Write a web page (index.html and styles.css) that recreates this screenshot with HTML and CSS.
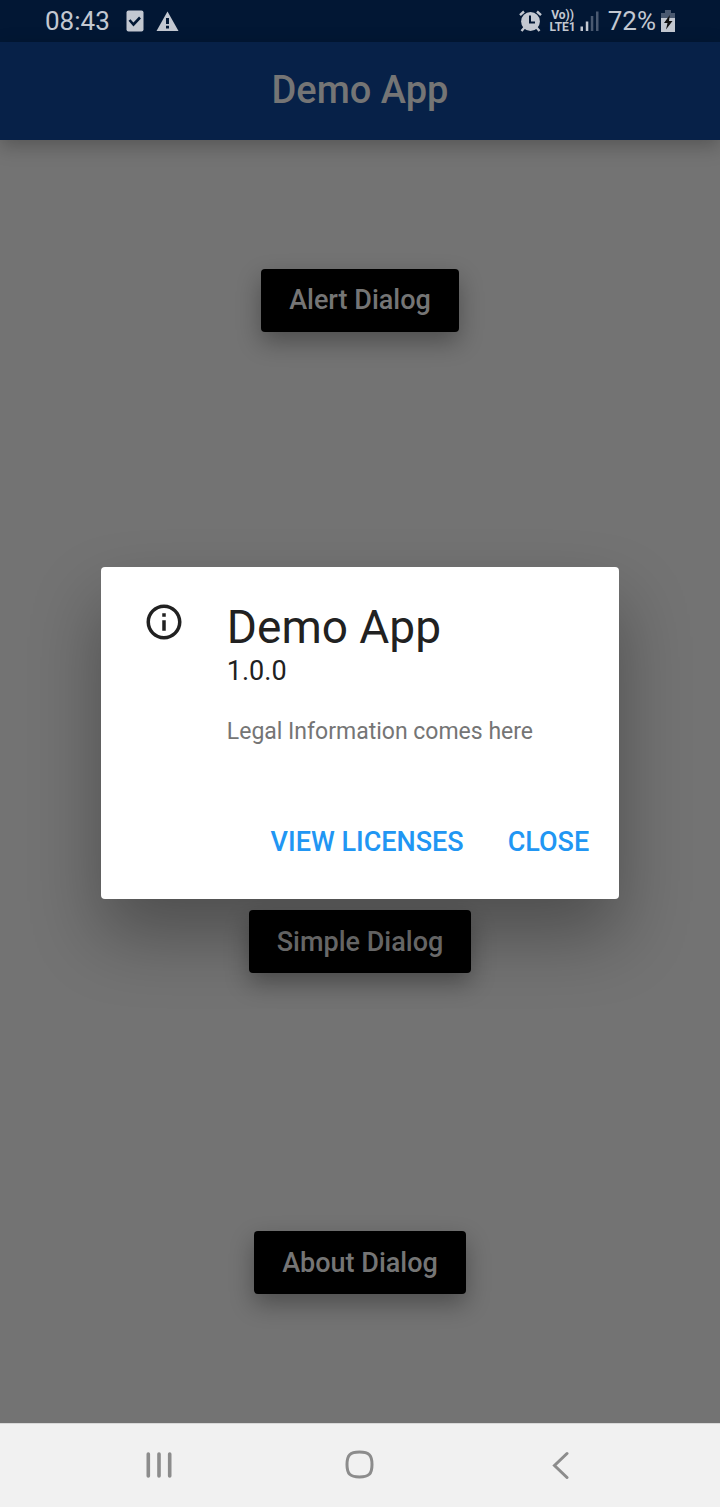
FILE: index.html
```html
<!DOCTYPE html>
<html lang="en">
<head>
<meta charset="utf-8">
<meta name="viewport" content="width=device-width, initial-scale=1">
<title>Demo App</title>
<link rel="stylesheet" href="styles.css">
</head>
<body>
<div class="screen">
  <div class="app">
    <div class="status-bar">
      <div class="status-group status-left">
        <span class="clock">08:43</span>
        <svg class="check-icon" width="18" height="22" viewBox="0 0 18 22" aria-hidden="true"><rect x="0.5" y="0.5" width="17" height="21" rx="2" fill="#c3c8d1"/><path d="M3.500 10l4 4.500 6.500-7" fill="none" stroke="#021734" stroke-width="2.600"/></svg>
        <svg width="23" height="20" viewBox="0 0 23 20" aria-hidden="true"><path d="M11.500 0.500L22.500 20H0.500z" fill="#c3c8d1"/><path d="M10 7h3v6h-3zM10 14.700h3v2.800h-3z" fill="#021734"/></svg>
      </div>
      <div class="status-group status-right">
        <svg class="alarm-icon" width="23" height="22" viewBox="0 0 23 22" aria-hidden="true"><circle cx="11.500" cy="11.500" r="9.400" fill="#c3c8d1"/><path d="M1 5.200L5 1.500M22 5.200L18 1.500M5.500 17.500l-3 3.500M17.500 17.500l3 3.500" fill="none" stroke="#c3c8d1" stroke-width="2.400"/><path d="M11 5.500v7h5" fill="none" stroke="#021734" stroke-width="2"/></svg>
        <span class="network"><span>Vo))</span><span>LTE1</span></span>
        <svg class="signal-icon" width="19" height="20" viewBox="0 0 19 20" aria-hidden="true"><path d="M0.500 15.500h2.500V20H0.500zM5.800 10.500h2.500V20H5.800z" fill="#c3c8d1"/><path d="M10.800 5h2.500v15h-2.500zM16 0.500h2.500V20H16z" fill="#4a5970"/></svg>
        <span class="battery-level">72%</span>
        <svg class="battery-icon" width="14" height="22" viewBox="0 0 14 22" aria-hidden="true"><path d="M4 0h6v3h4v6H0V3h4z" fill="#4a5970"/><path d="M0 8h14v14H0z" fill="#c3c8d1"/><path d="M8.800 5L3 13h3.500L5 19.500 11.500 11H8z" fill="#111"/></svg>
      </div>
    </div>
    <header class="app-bar"><h1 class="app-title">Demo App</h1></header>
    <main class="content">
      <button class="raised-button" type="button">Alert Dialog</button>
      <button class="raised-button covered" type="button" aria-label="Dialog"></button>
      <button class="raised-button" type="button">Simple Dialog</button>
      <button class="raised-button" type="button">About Dialog</button>
    </main>
    <div class="dialog-layer">
      <section class="dialog" role="dialog" aria-modal="true" aria-labelledby="dialog-title">
        <div class="dialog-body">
          <svg class="info-icon" width="42" height="42" viewBox="0 0 24 24" aria-hidden="true"><path d="M11 7h2v2h-2zm0 4h2v6h-2zm1-9C6.480 2 2 6.480 2 12s4.480 10 10 10 10-4.480 10-10S17.520 2 12 2zm0 18c-4.410 0-8-3.590-8-8s3.590-8 8-8 8 3.590 8 8-3.590 8-8 8z" fill="#212121"/></svg>
          <div class="dialog-text">
            <h2 class="dialog-title" id="dialog-title">Demo App</h2>
            <p class="version">1.0.0</p>
            <p class="legal">Legal Information comes here</p>
          </div>
        </div>
        <div class="dialog-actions">
          <button class="text-button" type="button">VIEW LICENSES</button>
          <button class="text-button" type="button">CLOSE</button>
        </div>
      </section>
    </div>
  </div>
  <nav class="nav-bar" aria-label="System navigation">
    <button class="nav-button" type="button" aria-label="Recent apps"><svg width="28" height="28" viewBox="0 0 28 28" aria-hidden="true"><path d="M3.300 3v22M14 3v22M24.700 3v22" stroke="#8c8c8c" stroke-width="3.600" stroke-linecap="round"/></svg></button>
    <button class="nav-button" type="button" aria-label="Home"><svg width="30" height="30" viewBox="0 0 30 30" aria-hidden="true"><path d="M14.500 2C24 2 27 5 27 14.500S24 27 14.500 27 2 24 2 14.500 5 2 14.500 2z" fill="none" stroke="#8c8c8c" stroke-width="3"/></svg></button>
    <button class="nav-button" type="button" aria-label="Back"><svg width="28" height="28" viewBox="0 0 28 28" aria-hidden="true"><path d="M20 2.500L7.500 14.500l12.500 12" fill="none" stroke="#8c8c8c" stroke-width="3" stroke-linecap="round"/></svg></button>
  </nav>
</div>
</body>
</html>
```
FILE: styles.css
```css
* {
  box-sizing: border-box;
}

body {
  margin: 0;
  font-family: Roboto, "Liberation Sans", sans-serif;
}

h1, h2, p {
  margin: 0;
}

button {
  border: 0;
  font-family: inherit;
}

svg {
  display: block;
  flex: none;
}

.screen {
  display: flex;
  flex-direction: column;
  min-height: 100vh;
}

.app {
  position: relative;
  display: flex;
  flex-direction: column;
  flex: 1;
  overflow: hidden;
  background: #737373;
}

.status-bar {
  display: flex;
  align-items: center;
  justify-content: space-between;
  height: 42px;
  padding: 0 45px;
  background: #021734;
  color: #c3c8d1;
  font-size: 26px;
}

.status-group {
  display: flex;
  align-items: center;
}

.status-left {
  gap: 12px;
}

.check-icon {
  margin-left: 4px;
}

.network {
  display: flex;
  flex-direction: column;
  align-items: center;
  margin: 0 4px 0 7px;
  font-size: 12px;
  font-weight: 700;
  line-height: 12px;
}

.battery-level {
  margin: 0 5px 0 9px;
}

.app-bar {
  display: flex;
  align-items: center;
  justify-content: center;
  height: 98px;
  padding-bottom: 2px;
  background: #072148;
  box-shadow: 0 6px 18px rgba(0, 0, 0, 0.25);
}

.app-title {
  color: #757575;
  font-size: 38px;
  font-weight: 500;
}

.content {
  display: flex;
  flex: 1;
  flex-direction: column;
  align-items: center;
  justify-content: space-around;
}

.raised-button {
  height: 63px;
  padding: 0 28px;
  border-radius: 4px;
  background: #000;
  box-shadow: 0 10px 24px rgba(0, 0, 0, 0.32);
  color: #757575;
  font-size: 27px;
  font-weight: 500;
}

.covered {
  width: 224px;
}

.dialog-layer {
  position: absolute;
  inset: 42px 0 0;
  display: flex;
  align-items: center;
  justify-content: center;
}

.dialog {
  width: 72%;
  padding: 34px 16px 25px;
  border-radius: 4px;
  background: #fff;
  box-shadow: 0 36px 70px rgba(0, 0, 0, 0.32);
}

.dialog-body {
  display: flex;
  gap: 42px;
  padding: 0 26px;
}

.dialog-title {
  margin-bottom: 2px;
  color: #212121;
  font-size: 46px;
  font-weight: 400;
  line-height: 52px;
}

.version {
  color: #212121;
  font-size: 27px;
  line-height: 32px;
}

.legal {
  margin-top: 31px;
  color: #757575;
  font-size: 23px;
  line-height: 27px;
}

.dialog-actions {
  display: flex;
  justify-content: flex-end;
  gap: 16px;
  margin-top: 66px;
}

.text-button {
  height: 63px;
  padding: 0 14px;
  background: transparent;
  color: #2196f3;
  font-size: 27px;
  font-weight: 500;
}

.nav-bar {
  display: flex;
  align-items: center;
  justify-content: center;
  gap: 137px;
  height: 84px;
  padding-bottom: 2px;
  border-top: 1px solid #d8d8d8;
  background: #f1f1f1;
}

.nav-button {
  display: flex;
  align-items: center;
  justify-content: center;
  width: 64px;
  height: 64px;
  padding: 0;
  background: transparent;
}
```
